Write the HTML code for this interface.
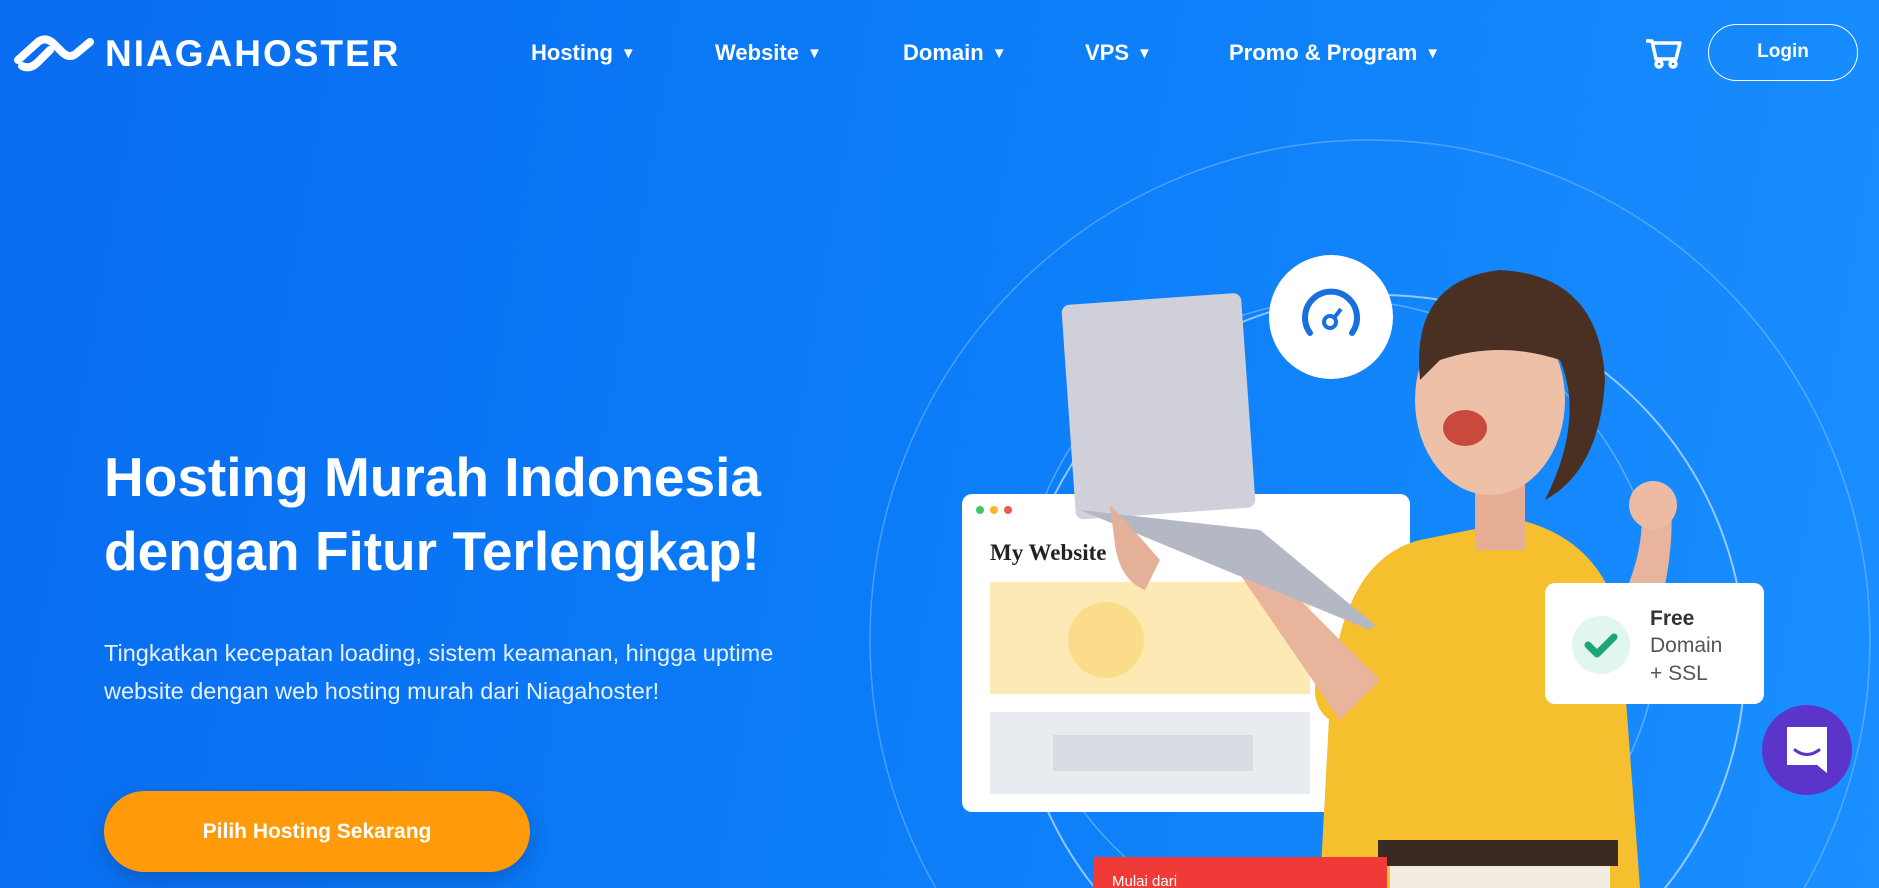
<!DOCTYPE html>
<html style="overflow:hidden;width:1879px;height:888px"><head><meta charset="utf-8"><style>
*{margin:0;padding:0;box-sizing:border-box}
body{width:1879px;height:888px;overflow:hidden;font-family:"Liberation Sans",sans-serif;background:linear-gradient(100deg,#0a6cf0 0%,#0b7df8 50%,#1a8fff 100%);position:relative;color:#fff}
.abs{position:absolute}
.logo{left:105px;top:33px;font-size:37px;font-weight:bold;letter-spacing:2px}
.nav{top:40px;font-size:22px;font-weight:bold;white-space:nowrap}
.nav span{font-size:15px;margin-left:8px;vertical-align:2px}
.login{left:1708px;top:24px;width:150px;height:57px;border:1.5px solid #fff;border-radius:29px;text-align:center;line-height:54px;font-weight:bold;font-size:19px}
h1{left:104px;top:440px;font-size:55px;line-height:74px;font-weight:bold}
p.d{left:104px;top:634px;font-size:23.5px;line-height:38px;color:#e6f0ff;white-space:nowrap}
.btn{left:104px;top:791px;width:426px;height:81px;border-radius:41px;background:#ff9a0a;text-align:center;line-height:81px;font-weight:bold;font-size:21px;box-shadow:0 8px 20px rgba(0,0,0,.18)}
</style></head><body>
<svg class="abs" style="left:0;top:0" width="1879" height="888">
<circle cx="1370" cy="640" r="500" fill="none" stroke="rgba(255,255,255,.25)" stroke-width="1.5"/>
<circle cx="1340" cy="620" r="320" fill="none" stroke="rgba(255,255,255,.3)" stroke-width="1.5"/>
<circle cx="1380" cy="660" r="365" fill="none" stroke="rgba(255,255,255,.55)" stroke-width="2"/>
<g fill="none" stroke="#fff" stroke-width="8" stroke-linecap="round">
<path d="M18 60 L38 42 Q46 36 54 44 L62 52 Q70 60 78 52 L90 42"/>
<path d="M22 66 Q30 70 38 62 L50 50"/>
</g>
<g fill="none" stroke="#fff" stroke-width="3.5" stroke-linejoin="round">
<path d="M1646 41 h6 l4 18 h20 l4 -16 h-26"/><circle cx="1659" cy="64" r="3"/><circle cx="1673" cy="64" r="3"/></g>
<rect x="962" y="494" width="448" height="318" rx="10" fill="#fff"/>
<circle cx="980" cy="510" r="4" fill="#3fc46a"/><circle cx="994" cy="510" r="4" fill="#f5b72a"/><circle cx="1008" cy="510" r="4" fill="#ef5a4d"/>
<text x="990" y="560" font-family="Liberation Serif,serif" font-weight="bold" font-size="23" fill="#222">My Website</text>
<rect x="990" y="582" width="320" height="112" fill="#fde9b4"/>
<circle cx="1106" cy="640" r="38" fill="#fbdc8a"/>
<rect x="990" y="712" width="320" height="82" fill="#e8ebf0"/>
<rect x="1053" y="735" width="200" height="36" fill="#d8dce2"/>
<circle cx="1331" cy="317" r="62" fill="#fff"/>
<path d="M1310 333 A26 26 0 1 1 1352 333" fill="none" stroke="#1a6fe0" stroke-width="6" stroke-linecap="round"/>
<circle cx="1330" cy="322" r="6" fill="none" stroke="#1a6fe0" stroke-width="4"/><path d="M1334 318 l7 -9" stroke="#1a6fe0" stroke-width="4"/>
<path d="M1320 888 L1330 700 Q1340 560 1420 540 L1520 520 Q1600 540 1620 620 L1640 888 Z" fill="#f6bf2d"/>
<path d="M1330 640 Q1300 700 1330 720 L1380 680 Z" fill="#f6bf2d"/>
<path d="M1380 680 L1260 560 Q1240 540 1230 560 L1340 720 Z" fill="#e8b49c"/>
<path d="M1600 640 Q1650 560 1640 500 L1670 490 Q1680 580 1630 690 Z" fill="#e8b49c"/>
<circle cx="1653" cy="505" r="24" fill="#edbba3"/>
<rect x="1378" y="840" width="240" height="26" fill="#3a2a22"/>
<rect x="1390" y="866" width="220" height="22" fill="#f3ece2"/>
<rect x="1475" y="480" width="50" height="70" fill="#e5ae95"/>
<ellipse cx="1490" cy="400" rx="75" ry="95" fill="#efc0a8"/>
<path d="M1420 380 Q1410 280 1500 270 Q1600 275 1605 380 Q1600 470 1545 500 Q1585 420 1560 360 Q1500 340 1440 360 Z" fill="#4a3023"/>
<ellipse cx="1465" cy="428" rx="22" ry="18" fill="#c94a3d"/>
<g transform="rotate(-4 1140 400)">
<rect x="1068" y="300" width="180" height="215" rx="8" fill="#cfd0d9"/>
</g>
<path d="M1080 510 L1260 530 L1375 625 L1370 630 Z" fill="#b4b7c4"/>
<path d="M1110 505 Q1125 520 1160 560 L1145 590 Q1120 580 1115 545 Z" fill="#e4b098"/>
<rect x="1545" y="583" width="219" height="121" rx="10" fill="#fff"/>
<circle cx="1601" cy="645" r="29" fill="#e0f6ef"/>
<path d="M1588 645 l9 9 l17 -17" fill="none" stroke="#1aa57a" stroke-width="7" stroke-linecap="round" stroke-linejoin="round"/>
<text x="1650" y="625" font-size="21" font-weight="bold" fill="#333">Free</text>
<text x="1650" y="652" font-size="21" fill="#555">Domain</text>
<text x="1650" y="680" font-size="21" fill="#555">+ SSL</text>
<rect x="1093" y="857" width="294" height="31" fill="#ef3a38"/>
<text x="1112" y="886" font-size="15" fill="#fff">Mulai dari</text>
<circle cx="1807" cy="750" r="45" fill="#5b35c9"/>
<path d="M1787 727 h40 v46 l-10 -8 h-30 Z" fill="#fff"/>
<path d="M1795 750 q12 9 24 0" fill="none" stroke="#5b35c9" stroke-width="3" stroke-linecap="round"/>
</svg>
<div class="abs logo">NIAGAHOSTER</div>
<div class="abs nav" style="left:531px">Hosting<span>▼</span></div>
<div class="abs nav" style="left:715px">Website<span>▼</span></div>
<div class="abs nav" style="left:903px">Domain<span>▼</span></div>
<div class="abs nav" style="left:1085px">VPS<span>▼</span></div>
<div class="abs nav" style="left:1229px">Promo &amp; Program<span>▼</span></div>
<div class="abs login">Login</div>
<h1 class="abs">Hosting Murah Indonesia<br>dengan Fitur Terlengkap!</h1>
<p class="abs d">Tingkatkan kecepatan loading, sistem keamanan, hingga uptime<br>website dengan web hosting murah dari Niagahoster!</p>
<div class="abs btn">Pilih Hosting Sekarang</div>
</body></html>
